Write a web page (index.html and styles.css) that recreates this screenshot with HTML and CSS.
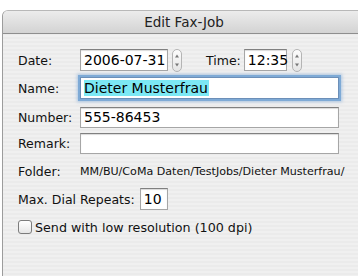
FILE: index.html
```html
<!DOCTYPE html>
<html>
<head>
<meta charset="utf-8">
<link rel="stylesheet" href="styles.css">
</head>
<body>
<div class="window">
  <div class="titlebar">Edit Fax-Job</div>
  <div class="content">
    <div class="row row-date">
      <span class="label">Date:</span>
      <span class="field f-date">2006-07-31</span>
      <span class="stepper"><svg width="10" height="23" viewBox="0 0 10 23"><path d="M3 8.5 L5 5.5 L7 8.5Z M3 14.5 L5 17.5 L7 14.5Z" fill="#777"/></svg></span>
      <span class="label l-time">Time:</span>
      <span class="field f-time">12:35</span>
      <span class="stepper"><svg width="10" height="23" viewBox="0 0 10 23"><path d="M3 8.5 L5 5.5 L7 8.5Z M3 14.5 L5 17.5 L7 14.5Z" fill="#777"/></svg></span>
    </div>
    <div class="row row-name">
      <span class="label">Name:</span>
      <span class="field f-wide focus"><span class="sel">Dieter Musterfrau</span></span>
    </div>
    <div class="row row-number">
      <span class="label">Number:</span>
      <span class="field f-wide">555-86453</span>
    </div>
    <div class="row row-remark">
      <span class="label">Remark:</span>
      <span class="field f-wide"></span>
    </div>
    <div class="row row-folder">
      <span class="label">Folder:</span>
      <span class="folder">MM/BU/CoMa Daten/TestJobs/Dieter Musterfrau/</span>
    </div>
    <div class="row row-max">
      <span class="label l-max">Max. Dial Repeats:</span>
      <span class="field f-max">10</span>
    </div>
    <div class="row row-check">
      <span class="checkbox"></span>
      <span class="label">Send with low resolution (100 dpi)</span>
    </div>
  </div>
</div>
</body>
</html>
```
FILE: styles.css
```css
html, body { margin: 0; padding: 0; background: #fff; }
body {
  font-family: "DejaVu Sans", sans-serif;
  width: 358px; height: 276px; overflow: hidden;
}
.window {
  margin: 10px 0 0 2px;
  width: 370px;
  height: 265px;
  border-left: 1px solid #9c9c9c;
  border-top: 1px solid #b8b8b8;
  border-top-left-radius: 6px;
  overflow: hidden;
  background: repeating-linear-gradient(#f0f0f0 0 2px, #ebebeb 2px 4px);
}
.titlebar {
  height: 22px;
  line-height: 22px;
  text-align: center;
  padding-right: 8px;
  font-size: 13.5px;
  color: #222;
  background: linear-gradient(#ececec, #d3d3d3);
  border-bottom: 1px solid #8e8e8e;
}
.content { padding: 15px 0 0 15px; }
.row { display: flex; align-items: center; height: 22px; margin-bottom: 6px; }
.row-name { margin-bottom: 7px; }
.row-number { margin-bottom: 4px; }
.label { font-size: 12.5px; color: #111; width: 62px; }
.field {
  box-sizing: border-box;
  height: 22px;
  background: #fff;
  border: 1px solid #a6a6a6;
  border-top-color: #808080;
  box-shadow: inset 0 1px 1px rgba(0,0,0,0.15);
  font-size: 14px;
  line-height: 20px;
  padding-left: 3px;
  color: #000;
}
.row-number .field, .row-remark .field { height: 21px; line-height: 19px; }
.f-date { width: 88px; }
.f-time { width: 43px; }
.stepper {
  width: 10px; height: 23px; margin-left: 4px;
  box-sizing: border-box;
  border: 1px solid #b4b4b4; border-radius: 5px;
  background: linear-gradient(#fdfdfd, #e4e4e4);
  display: flex; justify-content: center; align-items: center;
  overflow: hidden;
}
.stepper svg { flex: none; }
.l-time { width: auto; margin-left: 24px; margin-right: 3px; }
.f-time + .stepper { margin-left: 5px; }
.f-wide { width: 259px; }
.focus { box-shadow: 0 0 0 2px #7eaad6, 0 0 3px 3px rgba(110,160,215,0.5); border-color: #6c8fb8; }
.sel { background: #7ce8f4; padding-right: 1px; }
.folder { font-size: 11.1px; color: #111; }
.l-max { width: auto; margin-right: 5px; }
.f-max { width: 28px; }
.checkbox {
  box-sizing: border-box;
  width: 14px; height: 14px; border: 1px solid #7c7c7c; border-radius: 3px;
  background: linear-gradient(#fff, #e6e6e6); margin-right: 3px; margin-left: 0;
}
.row-check .label { width: auto; font-size: 12.7px; }
```
